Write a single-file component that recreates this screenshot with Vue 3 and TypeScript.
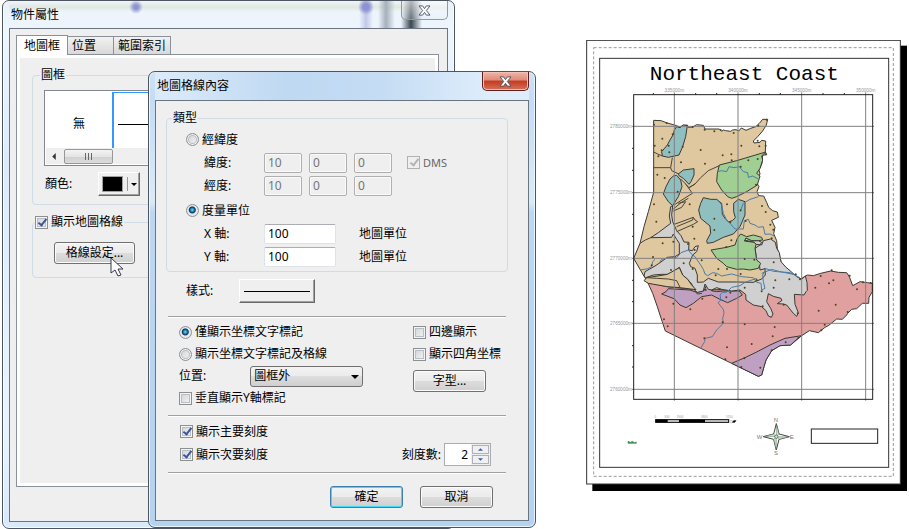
<script setup lang="ts">
import { ref } from 'vue'

type Point = [number, number]
interface Region { fill: string; points: string }

const showGrid = ref(true)
const gridType = ref('metric')
const labelMode = ref('text')
const majorTicks = ref(true)
const minorTicks = ref(true)
const dms = ref(true)
const placement = ref('outside')
const tickCount = ref('2')
const angleRows = [
  { id: 'lat', label: '緯度:', values: ['10', '0', '0'] },
  { id: 'lng', label: '經度:', values: ['10', '0', '0'] },
]
const axisRows = ref([
  { id: 'x', label: 'X 軸:', value: '100' },
  { id: 'y', label: 'Y 軸:', value: '100' },
])

const TAN = '#dfc7a0'
const TEAL = '#90bfc0'
const GREEN = '#9fcf92'
const GRAY = '#d0d0d0'
const RED = '#e0a0a0'
const PURPLE = '#bfa0c2'

const columns = [
  { x: 283, label: '335000m' },
  { x: 474, label: '340000m' },
  { x: 665, label: '345000m' },
  { x: 857, label: '350000m' },
]
const rows = [
  { y: 289, label: '2780000m' },
  { y: 488, label: '2775000m' },
  { y: 685, label: '2770000m' },
  { y: 880, label: '2765000m' },
  { y: 1078, label: '2760000m' },
]
const minorX = [220, 347, 410, 538, 601, 729, 793]
const minorY = [355, 421, 553, 619, 751, 815, 947, 1011]

const regions: Region[] = [
  { fill: TAN, points: '221,271 243,272 262,279 290,287 300,292 308,286 322,285 325,292 338,291 350,284 370,286 375,297 418,297 425,304 430,300 437,302 452,304 458,300 468,299 476,303 484,294 498,301 512,295 527,290 537,281 548,268 563,268 559,285 548,303 533,320 520,333 522,339 540,337 545,331 557,333 556,366 560,374 548,376 546,400 537,420 540,432 528,455 537,470 531,485 536,497 551,498 560,517 566,532 578,542 592,546 595,562 575,571 585,592 581,611 590,632 592,655 603,695 570,740 500,765 350,790 205,760 190,735 161,685 180,640 192,590 205,545 221,487' },
  { fill: RED, points: '203,757 262,770 348,779 480,780 660,748 682,735 700,737 722,730 752,723 775,727 800,728 808,740 818,767 840,755 862,758 877,760 877,785 867,802 866,820 847,820 830,836 815,838 803,850 800,855 787,868 770,867 745,887 735,892 715,908 688,902 665,917 632,945 600,947 575,962 558,990 552,1010 545,1035 535,1039 455,1000 362,955 256,903 244,867 232,830 218,790' },
  { fill: PURPLE, points: '265,776 258,785 245,792 282,806 300,825 318,833 340,820 365,800 395,795 420,808 443,818 470,805 487,795 478,783 430,783 410,785 395,782 380,765 372,782 350,787 330,780' },
  { fill: PURPLE, points: '455,1000 495,983 530,966 570,945 615,925 665,917 650,928 632,945 600,947 575,962 558,990 552,1010 545,1035 535,1039' },
  { fill: GRAY, points: '278,527 272,530 268,558 272,580 235,608 212,623 275,622 280,612 290,628 298,640 298,672 285,680 262,682 240,698 225,708 195,725 192,738 197,743 220,735 245,733 262,733 280,725 298,712 308,735 323,748 335,762 345,782 352,787 370,783 375,762 385,778 395,780 410,773 425,778 455,783 480,780 497,793 498,810 520,825 545,830 558,842 565,858 574,862 579,852 572,835 560,815 565,791 580,799 603,805 606,811 592,821 610,822 620,825 640,850 650,859 655,848 645,823 643,793 672,795 678,785 682,781 681,757 676,738 665,748 650,740 630,722 618,712 603,695 598,668 590,655 586,637 572,627 550,632 545,645 528,643 523,637 493,630 498,624 515,632 535,632 545,637 540,645 525,655 530,690 538,700 540,720 555,716 556,735 545,747 520,757 470,756 415,756 385,745 370,756 352,757 352,735 345,715 332,710 328,700 338,675 350,665 355,647 345,650 337,662 326,660 327,637 312,636 303,617 290,602 278,575 275,555' },
  { fill: TAN, points: '200,743 240,737 262,733 298,713 308,735 323,748 335,765 348,779 300,773 262,770 205,760 192,752' },
  { fill: TEAL, points: '290,290 300,293 310,285 322,287 317,320 308,350 297,375 265,382 247,378 245,365 262,345 270,330 280,313 283,300' },
  { fill: TEAL, points: '295,432 310,420 342,416 342,435 333,455 327,463 310,445 297,437' },
  { fill: TEAL, points: '290,436 302,450 306,470 295,500 278,527 265,515 250,492 258,470 270,447 280,438' },
  { fill: TEAL, points: '370,503 392,508 410,508 425,520 427,553 436,566 446,576 458,571 466,563 461,545 461,520 475,508 495,515 495,555 480,590 460,612 430,622 400,637 382,640 380,632 392,610 390,588 362,565 356,540 362,520' },
  { fill: GREEN, points: '418,405 470,392 557,366 545,378 548,390 540,415 530,430 540,438 532,465 500,485 470,500 455,505 443,500 425,480 410,455 412,430' },
  { fill: GREEN, points: '482,612 500,620 520,615 545,622 548,630 535,632 515,632 498,624 493,633 523,637 528,643 525,655 530,690 542,700 535,715 510,720 490,717 470,718 440,710 430,700 410,685 393,660 440,652 465,645 472,625' },
]

const boundaries = [
  '221,366 233,372 247,378',
  '221,413 272,413 277,383',
  '272,413 275,422 297,432',
  '327,473 345,462 362,443 385,422 418,407',
  '302,447 318,463 337,490 285,523',
  '317,463 327,473 345,462',
  '280,543 305,532 317,515 295,520',
  '280,537 303,518 325,505',
  '283,583 340,562 345,570 353,575 340,583 290,605',
  '340,562 338,570 290,590',
  '180,640 196,630 212,623',
  '200,743 230,745 265,747 290,752 300,772',
  '345,782 352,792 366,790',
]

const rivers = [
  '412,425 425,422 440,425 447,410 462,413 478,410 490,425 503,428 505,442 518,438 535,447',
  '412,508 425,525 430,550 440,570 452,582 465,597 490,597 493,572 505,568 510,580 525,585 535,592 550,590 555,613 570,612 582,618',
  '480,545 490,520 510,508 535,500',
  '180,720 203,716 215,710 218,695 225,688',
  '237,700 245,688 275,682 290,683 303,668 325,660 335,673 345,680 362,705 370,718 375,732 383,737 398,728 410,730 425,738 455,732 485,740 520,743 530,757 543,760 545,780 555,775 550,755 548,735 555,722',
  '545,730 575,718 600,725 650,735',
  '555,715 580,724 630,728 660,743',
  '530,745 495,757 480,767 455,772 440,787 427,787 420,795 423,810 414,818 430,838 432,850 428,865 430,880 410,900 397,920 375,925 374,935 362,955',
]

const stations: Point[] = [
  [260, 279], [222, 284], [278, 313], [247, 326], [224, 347], [266, 347], [245, 361], [268, 367], [235, 379],
  [308, 350], [362, 360], [303, 397], [338, 291], [374, 299], [403, 304], [422, 300], [461, 309], [484, 347],
  [428, 376], [454, 373], [375, 401], [455, 391], [505, 391], [533, 387], [482, 410], [538, 349], [533, 332],
  [557, 347], [558, 373], [535, 287], [560, 269], [232, 434], [254, 444], [293, 485], [222, 523], [229, 575],
  [329, 523], [441, 523], [403, 566], [403, 600], [451, 577], [482, 541], [546, 528], [557, 546], [571, 584],
  [580, 599], [338, 590], [343, 626], [248, 640], [280, 635], [454, 631], [439, 651], [219, 681], [365, 691],
  [311, 700], [494, 687], [523, 689], [581, 697], [273, 720], [215, 706], [324, 642], [344, 660], [407, 736],
  [415, 717], [441, 717], [482, 732], [497, 573], [528, 464], [575, 625], [530, 750], [338, 717], [586, 751],
  [628, 748], [660, 748], [647, 733], [722, 738], [755, 721], [760, 751], [747, 760], [706, 773], [809, 737],
  [849, 757], [872, 759], [831, 778], [767, 824], [716, 842], [803, 846], [494, 773], [545, 784], [581, 773],
  [548, 829], [611, 824], [653, 850], [377, 780], [397, 781], [451, 788], [439, 802], [367, 806], [280, 821],
  [331, 838], [252, 868], [263, 889], [428, 877], [373, 925], [441, 952], [436, 988], [494, 883], [584, 891],
  [578, 919], [515, 942], [617, 937], [655, 924], [724, 901], [734, 884], [575, 961], [541, 1013], [484, 1011], [493, 985],
]

const scaleLabels = [
  { x: 226, text: '0' },
  { x: 261, text: '950' },
  { x: 300, text: '1900' },
  { x: 373, text: '3800' },
  { x: 448, text: '5700' },
]
</script>

<template>
  <main class="desktop">
    <svg class="sheet" viewBox="18 30 963 1353" role="img" aria-label="Northeast Coast">
      <rect x="37" y="47" width="944" height="1336" fill="#000" />
      <rect x="20" y="31" width="941" height="1331" fill="#fff" stroke="#333" stroke-width="3" />
      <rect x="41" y="53" width="899" height="1286" fill="none" stroke="#999" stroke-width="3" stroke-dasharray="9 6" />
      <rect x="59" y="85" width="867" height="1227" fill="none" stroke="#333" stroke-width="3" />
      <text class="map-title" x="493" y="150" text-anchor="middle">Northeast Coast</text>

      <g stroke="#3c3a34" stroke-width="3" stroke-linejoin="round">
        <polygon v-for="(r, i) in regions" :key="i" :points="r.points" :fill="r.fill" />
      </g>
      <g fill="none" stroke="#4b4436" stroke-width="3" stroke-linejoin="round">
        <polyline v-for="(b, i) in boundaries" :key="i" :points="b" />
      </g>
      <g fill="none" stroke="#4f7ba6" stroke-width="3" stroke-linejoin="round">
        <polyline v-for="(r, i) in rivers" :key="i" :points="r" />
      </g>
      <g stroke="#808080" stroke-width="3">
        <line v-for="c in columns" :key="c.x" :x1="c.x" :x2="c.x" y1="187" y2="1112" />
        <line v-for="r in rows" :key="r.y" x1="156" x2="882" :y1="r.y" :y2="r.y" />
      </g>
      <g fill="#4f4418">
        <circle v-for="(s, i) in stations" :key="i" :cx="s[0]" :cy="s[1]" r="3" />
      </g>
      <g stroke="#222" stroke-width="3">
        <rect x="161" y="194" width="717" height="914" fill="none" />
        <line v-for="x in minorX" :key="x" :x1="x" :x2="x" y1="189" y2="194" />
        <line v-for="y in minorY" :key="y" x1="156" x2="161" :y1="y" :y2="y" />
      </g>
      <g class="axis-label">
        <text v-for="c in columns" :key="c.x" :x="c.x" y="186" text-anchor="middle">{{ c.label }}</text>
        <text v-for="r in rows" :key="r.y" x="156" :y="r.y + 5" text-anchor="end">{{ r.label }}</text>
      </g>

      <g class="scale-label">
        <text v-for="s in scaleLabels" :key="s.x" :x="s.x" y="1163" text-anchor="middle">{{ s.text }}</text>
      </g>
      <rect x="227" y="1169" width="219" height="8" fill="#ddd" stroke="#000" stroke-width="3" />
      <rect x="227" y="1169" width="36" height="8" />
      <rect x="297" y="1169" width="78" height="8" />
      <path d="M457 1177l4-5h7l-4 5z" stroke="#111" stroke-width="2" />
      <path d="M449 1172h8M449 1178h6" stroke="#aaa" stroke-width="2" />

      <path d="M144 1240v-6l7 3 6-3 6 4 6-2v4z" fill="#3f8f58" stroke="#3f8f58" stroke-width="2" />

      <g stroke="#444" stroke-width="3" stroke-linejoin="round">
        <path d="M589 1181L597 1212L628 1220L597 1228L589 1260L581 1228L550 1220L581 1212Z" fill="#fff" />
        <path d="M589 1181V1220L597 1212ZM628 1220H589L597 1228ZM589 1260V1220L581 1228ZM550 1220H589L581 1212Z" fill="#b9e6bd" stroke-width="1" />
        <circle cx="589" cy="1220" r="5" fill="#cdeccd" stroke-width="2" />
      </g>
      <g class="compass-label" text-anchor="middle">
        <text x="588" y="1176">N</text>
        <text x="588" y="1275">S</text>
        <text x="539" y="1227">W</text>
        <text x="635" y="1227">E</text>
      </g>
      <rect x="694" y="1197" width="199" height="43" fill="#fff" stroke="#222" stroke-width="3" />
    </svg>

    <section class="window properties" aria-label="物件屬性">
      <header class="title-bar">
        <h1>物件屬性</h1>
        <button class="close" type="button" aria-label="關閉">
          <svg viewBox="0 0 14 12"><path d="M1 1h4l2 3 2-3h4l-4 5 4 5H9L7 8l-2 3H1l4-5z" /></svg>
        </button>
      </header>
      <div class="window-body">
        <nav class="tabs">
          <button class="tab active" type="button">地圖框</button>
          <button class="tab" type="button">位置</button>
          <button class="tab" type="button">範圍索引</button>
        </nav>
        <div class="tab-panel">
          <fieldset class="frame-group">
            <legend>圖框</legend>
            <div class="frame-list">
              <div class="frame-options">
                <button type="button" class="frame-option">無</button>
                <button type="button" class="frame-option selected" aria-label="實線"><span></span></button>
              </div>
              <div class="scrollbar">
                <svg class="arrow" viewBox="0 0 4 8"><path d="M4 0v8L0 4z" /></svg>
                <div class="thumb"><i></i><i></i><i></i></div>
              </div>
            </div>
            <div class="color-row">
              <label for="frame-color">顏色:</label>
              <button id="frame-color" class="raised color-button" type="button">
                <span class="swatch"></span>
                <svg class="caret" viewBox="0 0 6 3"><path d="M0 0h6L3 3z" /></svg>
              </button>
            </div>
          </fieldset>
          <fieldset class="grid-group">
            <legend><label class="option"><input v-model="showGrid" type="checkbox" />顯示地圖格線</label></legend>
            <button class="push grid-settings" type="button">
              格線設定...
              <svg class="pointer" viewBox="0 0 13 20"><path d="M1 1v15l4-3 3 6 3-1-3-6h5z" /></svg>
            </button>
          </fieldset>
        </div>
      </div>
    </section>

    <section class="window grid-dialog" role="dialog" aria-label="地圖格線內容">
      <header class="title-bar">
        <h2>地圖格線內容</h2>
        <button class="close danger" type="button" aria-label="關閉">
          <svg viewBox="0 0 14 12"><path d="M1 1h4l2 3 2-3h4l-4 5 4 5H9L7 8l-2 3H1l4-5z" /></svg>
        </button>
      </header>
      <form class="window-body" @submit.prevent>
        <fieldset class="type-group">
          <legend>類型</legend>
          <label class="option row"><input v-model="gridType" type="radio" name="grid-type" value="angle" />經緯度</label>
          <div v-for="(r, i) in angleRows" :key="r.id" class="row fields">
            <label :for="r.id">{{ r.label }}</label>
            <input v-for="(v, n) in r.values" :id="n ? undefined : r.id" :key="n" class="text" :value="v" :aria-label="r.label" disabled />
            <label v-if="i === 0" class="option dms"><input v-model="dms" type="checkbox" disabled />DMS</label>
          </div>
          <label class="option row metric"><input v-model="gridType" type="radio" name="grid-type" value="metric" />度量單位</label>
          <div v-for="r in axisRows" :key="r.id" class="row fields">
            <label :for="'axis-' + r.id">{{ r.label }}</label>
            <input :id="'axis-' + r.id" v-model="r.value" class="text wide" />
            <span class="unit">地圖單位</span>
          </div>
        </fieldset>

        <div class="style-row">
          <label for="line-style">樣式:</label>
          <button id="line-style" class="raised line-button" type="button"><span></span></button>
        </div>

        <hr />

        <div class="label-area">
          <div class="label-modes">
            <label class="option row"><input v-model="labelMode" type="radio" name="label-mode" value="text" />僅顯示坐標文字標記</label>
            <label class="option row"><input v-model="labelMode" type="radio" name="label-mode" value="grid" />顯示坐標文字標記及格線</label>
            <div class="row place">
              <label for="placement">位置:</label>
              <span class="select">
                <select id="placement" v-model="placement"><option value="outside">圖框外</option></select>
                <svg class="caret" viewBox="0 0 8 4"><path d="M0 0h8L4 4z" /></svg>
              </span>
            </div>
            <label class="option row"><input type="checkbox" />垂直顯示Y軸標記</label>
          </div>
          <div class="label-extras">
            <label class="option row"><input type="checkbox" />四邊顯示</label>
            <label class="option row"><input type="checkbox" />顯示四角坐標</label>
            <button class="push" type="button">字型...</button>
          </div>
        </div>

        <hr />

        <div class="tick-area">
          <div>
            <label class="option row"><input v-model="majorTicks" type="checkbox" />顯示主要刻度</label>
            <label class="option row"><input v-model="minorTicks" type="checkbox" />顯示次要刻度</label>
          </div>
          <div class="tick-count">
            <label for="tick-count">刻度數:</label>
            <span class="spinner">
              <input id="tick-count" v-model="tickCount" />
              <span class="steps">
                <button type="button" aria-label="增加"><svg viewBox="0 0 6 3"><path d="M0 3h6L3 0z" /></svg></button>
                <button type="button" aria-label="減少"><svg viewBox="0 0 6 3"><path d="M0 0h6L3 3z" /></svg></button>
              </span>
            </span>
          </div>
        </div>

        <hr />

        <footer class="actions">
          <button class="push default" type="submit">確定</button>
          <button class="push" type="button">取消</button>
        </footer>
      </form>
    </section>
  </main>
</template>

<style>
body {
  margin: 0;
  background: #fff;
}
</style>

<style scoped>
.desktop {
  position: relative;
  display: grid;
  grid-template-columns: 586fr 321fr 2fr;
  align-items: start;
  min-height: 100vh;
  padding-top: 40px;
  box-sizing: border-box;
  overflow: hidden;
  font-family: "Noto Sans", "Noto Sans CJK TC", sans-serif;
  font-size: 12px;
  line-height: 16px;
  color: #000;
}
button, input, select {
  margin: 0;
  padding: 0;
  box-sizing: border-box;
  font: inherit;
  color: inherit;
}
.sheet {
  grid-column: 2;
  display: block;
  width: 100%;
}
.map-title {
  font-family: "Liberation Mono", monospace;
  font-size: 63px;
}
.axis-label, .scale-label {
  font-family: "Liberation Sans", sans-serif;
  font-size: 14px;
  fill: #999;
}
.scale-label {
  font-size: 9px;
}
.compass-label {
  font-family: "Liberation Sans", sans-serif;
  font-size: 18px;
  fill: #777;
}

.window {
  position: absolute;
  display: flex;
  flex-direction: column;
  box-sizing: border-box;
  padding: 0 6px 6px;
  border: 1px solid #4c5560;
  border-radius: 7px;
}
.properties {
  top: 0;
  bottom: 0;
  left: 2px;
  width: 453px;
  background: linear-gradient(#e9f1f8, #eef6ff 30px, #dcebfb 160px, #eaf4ff 420px, #d8e9fb);
  box-shadow: inset 0 0 0 1px #f8fcff;
}
.grid-dialog {
  top: 71px;
  left: 148px;
  width: 388px;
  background: linear-gradient(#cfe2f6, #c4dcf4 28px, #dbeaf9 130px, #bdd7f3 140px, #b5d2f1);
  box-shadow: inset 0 0 0 1px #e9f5ff;
}
.title-bar {
  display: flex;
  justify-content: space-between;
  align-items: flex-start;
  height: 27px;
}
.grid-dialog .title-bar {
  height: 28px;
  background: linear-gradient(90deg, #dcebfa, #bfd9f2 35%, #c4dcf4 60%, #dfedfb 90%);
}
.properties .title-bar {
  background:
    radial-gradient(circle at 127px 6px, #8d92d2 2px, transparent 7px),
    radial-gradient(circle at 357px 6px, #8d92d2 3px, transparent 8px),
    linear-gradient(90deg, transparent 350px, #c2c8e6 357px, transparent 364px),
    linear-gradient(90deg, transparent 369px, #a5b0bb 377px, transparent 386px),
    linear-gradient(90deg, transparent 392px, #3a454f 402px, transparent 413px),
    linear-gradient(#edf3f8 1px, #dfe8e0 6px, #edf4fc 11px);
}
.title-bar h1, .title-bar h2 {
  margin: 6px 0 0 2px;
  font-size: 12px;
  font-weight: 400;
  line-height: 16px;
}
.close {
  width: 47px;
  height: 19px;
  border: 1px solid #8f9aa6;
  border-top: 0;
  border-radius: 0 0 5px 5px;
  background: linear-gradient(#ffffff99, #dfe8f144);
}
.close.danger {
  border-color: #5a2020;
  background: linear-gradient(#f0b5a8, #e08a78 45%, #c43a20 50%, #d8705a);
  box-shadow: inset 0 0 0 1px #f3c0b4;
}
.close svg {
  display: block;
  width: 13px;
  height: 11px;
  margin: 0 auto;
  fill: #fff;
  stroke: #4a5565;
  stroke-width: 1;
}
.window-body {
  flex: 1;
  display: flex;
  flex-direction: column;
  border: 1px solid #6a7582;
  background: #efefef;
}

.tabs {
  display: flex;
  align-items: flex-end;
  margin: 6px 6px 0;
}
.tab {
  height: 18px;
  padding: 0 17px 0 4px;
  border: 1px solid #8b919b;
  border-bottom: 0;
  border-left-width: 2px;
  background: linear-gradient(#f2f2f2, #d8d8d8);
}
.tab + .tab {
  border-left-width: 0;
}
.tab:last-child {
  padding: 0 4px;
}
.tab.active {
  height: 20px;
  margin-bottom: -1px;
  padding: 0 7px;
  border-width: 1px 1px 0;
  background: #fff;
  z-index: 1;
}
.tab-panel {
  flex: 1;
  margin: 0 8px 34px 6px;
  padding: 12px 8px 0 12px;
  border: 1px solid #8b919b;
  box-shadow: inset 0 0 0 3px #fff;
}
fieldset {
  min-width: 0;
  margin: 0;
  padding: 0;
  border: 1px solid #d0dbe6;
  border-radius: 4px;
}
legend {
  margin-left: 7px;
  padding: 0 1px;
  background: #efefef;
}
.frame-group {
  margin-left: 3px;
  padding: 7px 10px 8px 11px;
}
.frame-group legend {
  margin-left: -4px;
}
.frame-list {
  padding: 1px;
  border: 1px solid #828790;
  background: #fff;
}
.frame-options {
  display: flex;
  height: 56px;
}
.frame-option {
  width: 66px;
  padding-top: 8px;
  border: 0;
  background: none;
}
.frame-option.selected {
  width: 68px;
  padding: 0 4px;
  border: solid #3399ff;
  border-width: 1px 2px 0;
}
.frame-option.selected span {
  display: block;
  height: 1px;
  margin-top: 8px;
  background: #000;
}
.scrollbar {
  display: flex;
  align-items: center;
  height: 16px;
  background: #efefef;
}
.arrow {
  width: 4px;
  height: 7px;
  margin: 0 8px 0 6px;
  fill: #333;
}
.thumb {
  display: flex;
  justify-content: center;
  align-items: center;
  gap: 2px;
  width: 47px;
  height: 13px;
  border: 1px solid #979797;
  border-radius: 2px;
  background: linear-gradient(#f4f4f4, #e4e4e4 50%, #d0d0d0 51%, #dcdcdc);
}
.thumb i {
  width: 1px;
  height: 7px;
  background: #666;
}
.color-row {
  display: flex;
  align-items: center;
  gap: 26px;
  margin: 6px 0 0 1px;
}
.raised {
  border: 1px solid;
  border-color: #fff #696969 #696969 #fff;
  background: #efefef;
  box-shadow: inset -1px -1px 0 #a0a0a0;
}
.color-button {
  display: flex;
  align-items: center;
  width: 42px;
  height: 24px;
  padding-left: 3px;
}
.swatch {
  width: 19px;
  height: 14px;
  border: 1px solid #a0a0a0;
  background: #000;
  box-shadow: 5px 0 0 -1px #efefef, 6px 0 0 -1px #999;
}
.caret {
  width: 6px;
  height: 3px;
  margin-left: 8px;
}
.grid-group {
  margin: 9px 0 0 3px;
  padding: 12px 20px 13px 21px;
}
.grid-group legend {
  margin-left: -20px;
}
.option {
  display: flex;
  align-items: center;
  gap: 3px;
}
input[type="checkbox"], input[type="radio"] {
  position: relative;
  flex: none;
  appearance: none;
  width: 13px;
  height: 13px;
  border: 1px solid #8e8f8f;
  background: linear-gradient(135deg, #cdd1d6, #f6f6f6);
  box-shadow: inset 0 0 0 1px #f4f4f4, inset 0 0 0 2px #b8bec5;
}
input[type="radio"] {
  border-radius: 50%;
}
input[type="radio"]:checked {
  background: radial-gradient(circle at 48% 45%, #7fdcff 0, #1377ad 2px, #0b3350 3px, #e4e8ec 4px);
  box-shadow: none;
}
input[type="checkbox"]:checked::after {
  content: "";
  position: absolute;
  top: 0;
  left: 4px;
  width: 3px;
  height: 7px;
  border: solid #3d559e;
  border-width: 0 2px 2px 0;
  transform: rotate(38deg);
}
input[type="checkbox"]:disabled {
  border-color: #b1b1b1;
  background: #efefef;
  box-shadow: none;
}
input[type="checkbox"]:disabled::after {
  border-color: #b4b4b4;
}
.push {
  position: relative;
  width: 73px;
  height: 22px;
  border: 1px solid #707070;
  border-radius: 3px;
  background: linear-gradient(#f3f3f3, #ebebeb 49%, #dddddd 50%, #cfcfcf);
  box-shadow: inset 0 0 0 1px #fbfbfb;
  line-height: 18px;
}
.push.default {
  border-color: #3c7fb1;
  box-shadow: inset 0 0 0 1px #45d8fb;
}
.grid-settings {
  display: block;
  width: 81px;
}
.pointer {
  position: absolute;
  top: 14px;
  left: 55px;
  width: 13px;
  height: 20px;
  fill: #fff;
  stroke: #333a48;
  stroke-width: 1;
}

form.window-body {
  padding: 9px 20px 12px 10px;
}
.type-group {
  padding: 2px 0 3px 19px;
}
.type-group legend {
  margin-left: -14px;
}
.type-group .row {
  height: 23px;
}
.type-group .metric {
  margin-top: 2px;
}
.fields {
  display: flex;
  align-items: center;
  gap: 7px;
  padding-left: 18px;
}
.fields > label:first-child {
  width: 53px;
}
.text {
  width: 38px;
  height: 20px;
  padding: 0 3px;
  border: 1px solid;
  border-color: #abadb3 #dfe3e8 #dfe3e8 #dfe3e8;
  border-radius: 2px;
  background: #fff;
}
.text:disabled {
  border-color: #afafaf;
  background: #efefef;
  color: #757575;
  box-shadow: inset 0 0 0 1px #fafafa;
}
.text.wide {
  width: 72px;
}
.unit {
  margin-left: 16px;
}
.dms {
  margin-left: 8px;
  color: #666;
  font-size: 11px;
}
.style-row {
  display: flex;
  align-items: center;
  gap: 26px;
  margin: 7px 0 13px 20px;
}
.line-button {
  width: 76px;
  height: 24px;
  padding: 0 4px;
}
.line-button span {
  display: block;
  height: 1px;
  background: #000;
}
hr {
  width: calc(100% - 4px);
  height: 1px;
  margin: 0 2px;
  border: 0;
  border-bottom: 1px solid #fff;
  background: #a0a0a0;
}
.label-area {
  display: flex;
  margin: 3px 0 6px 13px;
}
.label-modes {
  width: 234px;
}
.row {
  height: 22px;
}
.place {
  display: flex;
  align-items: center;
  gap: 44px;
}
.select {
  position: relative;
  width: 113px;
}
.select select {
  display: block;
  appearance: none;
  width: 100%;
  height: 21px;
  padding-left: 3px;
  border: 1px solid #707070;
  border-radius: 3px;
  background: linear-gradient(#f3f3f3, #ebebeb 49%, #dddddd 50%, #cfcfcf);
}
.select .caret {
  position: absolute;
  top: 9px;
  right: 4px;
  width: 8px;
  height: 4px;
}
.label-extras .push {
  margin-top: 5px;
}
.tick-area {
  display: flex;
  justify-content: space-between;
  align-items: flex-end;
  margin: 3px 17px 6px 14px;
}
.tick-area .row {
  height: 23px;
}
.tick-count {
  display: flex;
  align-items: center;
  gap: 3px;
}
.spinner {
  display: flex;
  width: 47px;
  height: 23px;
  box-sizing: border-box;
  border: 1px solid #abadb3;
  background: #fff;
}
.spinner input {
  flex: 1;
  min-width: 0;
  padding-right: 3px;
  border: 0;
  background: none;
  text-align: right;
}
.steps {
  display: grid;
  gap: 1px;
  width: 17px;
  padding: 1px;
  background: #efefef;
}
.steps button {
  display: grid;
  place-items: center;
  border: 1px solid #b0b0b8;
  background: #f0f0f0;
}
.steps svg {
  width: 5px;
  height: 3px;
  fill: #45589c;
}
.actions {
  display: flex;
  justify-content: flex-end;
  gap: 17px;
  margin: 12px 15px 0 0;
}
</style>
